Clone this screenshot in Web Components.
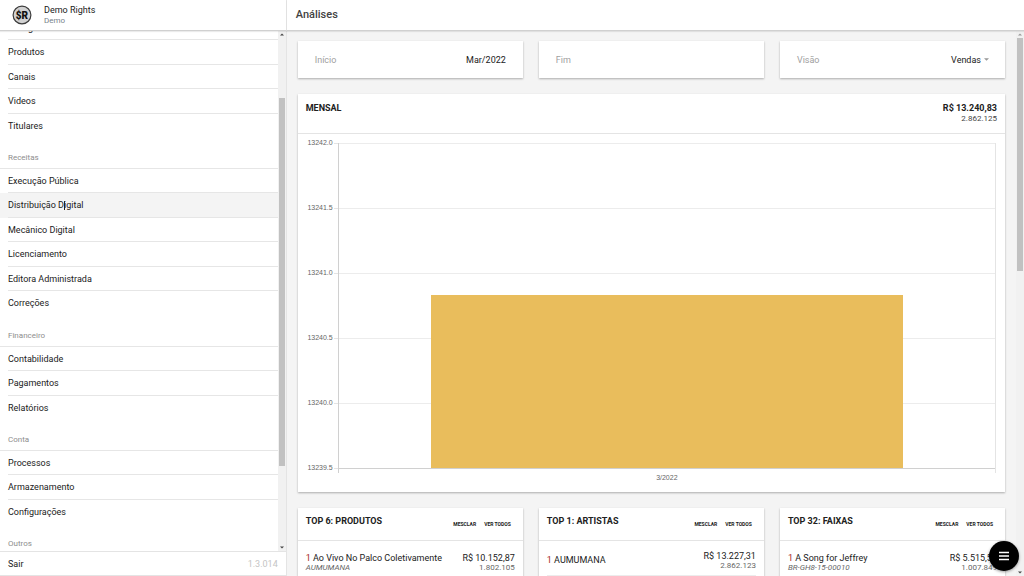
<!DOCTYPE html>
<html lang="pt-BR">
<head>
<meta charset="utf-8">
<title>Análises</title>
<style>
  html, body { height: 100%; }
  body { margin: 0; overflow: hidden; font-family: Roboto, sans-serif; color: #212121; background: #f4f4f4; }
</style>
</head>
<body>
<rights-app>
  <user-badge slot="brand" name="Demo Rights" account="Demo"></user-badge>
  <nav-group slot="nav" items="Fonogramas,Produtos,Canais,Videos,Titulares"></nav-group>
  <nav-group slot="nav" heading="Receitas" active="Distribuição Digital" items="Execução Pública,Distribuição Digital,Mecânico Digital,Licenciamento,Editora Administrada,Correções"></nav-group>
  <nav-group slot="nav" heading="Financeiro" items="Contabilidade,Pagamentos,Relatórios"></nav-group>
  <nav-group slot="nav" heading="Conta" items="Processos,Armazenamento,Configurações"></nav-group>
  <nav-group slot="nav" heading="Outros"></nav-group>
  <dash-grid>
    <filter-field label="Início" value="Mar/2022"></filter-field>
    <filter-field label="Fim" value=""></filter-field>
    <filter-field label="Visão" value="Vendas" kind="select"></filter-field>
    <bar-chart heading="Mensal" total="R$ 13.240,83" count="2.862.125" ticks="13242.0,13241.5,13241.0,13240.5,13240.0,13239.5" category="3/2022"></bar-chart>
    <ranking-card heading="Top 6: Produtos" name="Ao Vivo No Palco Coletivamente" detail="AUMUMANA" amount="R$ 10.152,87" count="1.802.105"></ranking-card>
    <ranking-card heading="Top 1: Artistas" name="AUMUMANA" amount="R$ 13.227,31" count="2.862.123"></ranking-card>
    <ranking-card heading="Top 32: Faixas" name="A Song for Jeffrey" detail="BR-GH8-15-00010" amount="R$ 5.515,53" count="1.007.849"></ranking-card>
  </dash-grid>
</rights-app>

<script>
const CARD = 'background:#fff; box-shadow:0 1px 2px rgba(0,0,0,.3);';

function define(name, render, after) {
  customElements.define(name, class extends HTMLElement {
    connectedCallback() {
      if (this.shadowRoot) return;
      const root = this.attachShadow({ mode: 'open' });
      root.innerHTML = render(key => this.getAttribute(key) || '');
      if (after) after(root);
    }
  });
}

define('user-badge', a => `
  <style>
    :host { display:flex; align-items:center; gap:12px; padding-left:12px; }
    svg { display:block; width:20px; height:20px; }
    strong, span { display:block; }
    strong { font-size:9px; line-height:11px; font-weight:400; }
    span { font-size:8px; line-height:10px; color:#78838a; }
  </style>
  <svg viewBox="0 0 20 20" aria-hidden="true">
    <circle cx="10" cy="10" r="8.9" fill="#d2d2d2" stroke="#3c3c3c" stroke-width="1.2"/>
    <text x="10" y="13.6" text-anchor="middle" font-family="Roboto, sans-serif" font-weight="900" font-size="10" fill="#111">$R</text>
  </svg>
  <div><strong>${a('name')}</strong><span>${a('account')}</span></div>`);

define('nav-group', a => `
  <style>
    :host { display:block; }
    h2 { margin:0; height:31px; box-sizing:border-box; padding:15px 8px 0; border-bottom:1px solid #e6e6e6;
         font-size:8px; line-height:10px; font-weight:400; color:#8e8e8e; }
    ul { margin:0; padding:0; list-style:none; }
    li { height:24px; }
    li:nth-child(even) { height:25px; }
    a { position:relative; display:flex; height:100%; padding-left:8px; color:inherit; text-decoration:none; font-size:9px; }
    a > span { flex:1; display:flex; align-items:center; border-bottom:1px solid #e6e6e6; }
    li:last-child span { border-color:transparent; }
    a.active { background:#f4f4f4; }
    i { position:absolute; left:64px; top:8px; width:1px; height:9px; background:#222; }
  </style>
  ${a('heading') ? `<h2>${a('heading')}</h2>` : ''}
  <ul>${a('items').split(',').filter(Boolean).map(t => {
    const on = t === a('active');
    return `<li><a href="#"${on ? ' class="active"' : ''}><span>${t}</span>${on ? '<i></i>' : ''}</a></li>`;
  }).join('')}</ul>`);

define('scroll-rail', a => `
  <style>
    :host { display:grid; grid-template-rows:7px 1fr 7px; background:#f1f1f1; }
    svg { display:block; width:100%; height:7px; }
    div { display:grid; grid-template-rows:var(--before) var(--thumb) 1fr; }
    b { grid-row:2; margin:0 1px; background:#c1c1c1; }
  </style>
  <svg viewBox="0 0 8 7"><path d="M2 4.6h4L4 2.4z" fill="${a('top') || '#444'}"/></svg>
  <div><b></b></div>
  <svg viewBox="0 0 8 7"><path d="M2 2.4h4L4 4.6z" fill="#444"/></svg>`);

define('filter-field', a => `
  <style>
    :host { display:block; ${CARD} }
    div { display:flex; align-items:center; height:37px; padding:0 17px; font-size:9px; }
    label { color:#a0a0a0; }
    input, select { flex:1; min-width:0; border:0; padding:0; margin:0; background:none; appearance:none; outline:0;
      font:inherit; color:#212121; text-align:right; text-align-last:right; }
    svg { width:5px; height:3px; margin-left:3px; margin-right:-1px; }
  </style>
  <div><label for="f">${a('label')}</label>${a('kind') === 'select'
    ? `<select id="f"><option>${a('value')}</option></select><svg viewBox="0 0 6 3"><path d="M0 0h6L3 3z" fill="#999"/></svg>`
    : `<input id="f" type="text" value="${a('value')}">`}</div>`);

define('bar-chart', a => {
  const ticks = a('ticks').split(',');
  return `
  <style>
    :host { display:block; grid-column:1 / -1; ${CARD} }
    header { display:flex; justify-content:space-between; height:40px; box-sizing:border-box; padding:9px 8px 0; border-bottom:1px solid #e4e4e4; }
    h2 { margin:0; font-size:9px; line-height:11px; font-weight:700; text-transform:uppercase; }
    p { margin:0; text-align:right; font-size:8px; line-height:10px; color:#444; }
    p strong { display:block; font-size:9px; line-height:11px; color:#212121; }
    .chart { display:grid; grid-template-columns:40px 1fr; padding:9px 9px 9px 0; font-family:"Liberation Sans", Arial, sans-serif; font-size:7px; color:#666; }
    .row { grid-column:1; height:65px; display:flex; justify-content:flex-end; align-items:flex-start; }
    .row:nth-child(6) { height:5px; }
    .row span { line-height:8px; margin:-4px 1px 0 0; }
    .row::after { content:""; width:4px; height:1px; background:#e4e4e4; }
    .plot { grid-column:2; grid-row:1 / 7; display:grid; grid-template-rows:repeat(5, 65px) 5px; border-left:1px solid #d0d0d0; border-right:1px solid #e4e4e4; }
    .line { grid-column:1; border-top:1px solid #ececec; }
    .line:nth-child(6) { border-color:#d0d0d0; }
    .bar { grid-column:1; grid-row:1 / 6; align-self:end; justify-self:center; width:72%; height:173px; background:#e9bd5c; }
    .cat { grid-column:2; text-align:center; line-height:10px; }
  </style>
  <header><h2>${a('heading')}</h2><p><strong>${a('total')}</strong>${a('count')}</p></header>
  <div class="chart">
    ${ticks.map((t, i) => `<div class="row" style="grid-row:${i + 1}"><span>${t}</span></div>`).join('')}
    <div class="plot">${ticks.map((_, i) => `<div class="line" style="grid-row:${i + 1}"></div>`).join('')}<div class="bar"></div></div>
    <div class="cat">${a('category')}</div>
  </div>`;
});

define('ranking-card', a => `
  <style>
    :host { display:block; ${CARD} }
    header { display:flex; align-items:center; height:33px; box-sizing:border-box; padding:0 12px 0 8px; border-bottom:1px solid #e4e4e4; }
    h2 { flex:1; margin:0; padding-bottom:5px; font-size:9px; line-height:11px; font-weight:700; text-transform:uppercase; }
    button { border:0; background:none; padding:0; margin-left:8px; font:700 5px/8px Roboto, sans-serif; color:#212121; text-transform:uppercase; }
    ol { margin:0; padding:0 8px; list-style:none; }
    li { display:flex; justify-content:space-between; align-items:center; box-sizing:border-box; border-bottom:1px solid #ececec; font-size:9px; line-height:11px;
         ${a('detail') ? 'height:44px;' : 'height:35px; padding-top:5px;'} }
    b { font-weight:400; color:#a82828; }
    em, small { display:block; font-size:8px; line-height:8px; color:#666; }
    .sum { text-align:right; }
  </style>
  <header><h2>${a('heading')}</h2><button type="button">Mesclar</button><button type="button">Ver todos</button></header>
  <ol><li><div><b>1</b> ${a('name')}${a('detail') ? `<em>${a('detail')}</em>` : ''}</div>
  <div class="sum">${a('amount')}<small>${a('count')}</small></div></li></ol>`);

define('dash-grid', () => `
  <style>
    :host { display:grid; grid-template-columns:repeat(3, minmax(0, 1fr)); gap:16px; padding:10px 11px; }
  </style>
  <slot></slot>`);

define('rights-app', () => `
  <style>
    :host { display:grid; grid-template-columns:28% minmax(0, 1fr); grid-template-rows:31px minmax(0, 1fr); height:100vh; }
    .brand, .title { display:flex; align-items:center; background:#fff; border-bottom:1px solid #d0d0d0; box-shadow:0 1px 1px rgba(0,0,0,.08); z-index:1; }
    .brand, aside { border-right:1px solid #e4e4e4; }
    h1 { margin:0; padding-left:9px; font-size:11px; line-height:14px; font-weight:500; color:#424242; }
    aside { display:grid; grid-template-rows:minmax(0, 1fr) 25px; background:#fff; }
    .scroll { display:grid; grid-template-columns:minmax(0, 1fr) 8px; min-height:0; }
    nav { overflow:hidden; }
    footer { display:flex; justify-content:space-between; align-items:center; box-sizing:border-box; padding:0 8px; border-top:1px solid #e4e4e4; border-bottom:1px solid #e4e4e4; font-size:9px; }
    footer a { color:inherit; text-decoration:none; }
    footer span { color:#c4c4c4; }
    .body { display:grid; grid-template-columns:minmax(0, 1fr) 8px; grid-template-rows:minmax(0, 1fr); }
    main { overflow:hidden; }
    .menu-rail { --before:60px; --thumb:368px; }
    .page-rail { --before:0px; --thumb:233px; }
    button { position:fixed; right:5px; bottom:5px; width:30px; height:30px; padding:0; border:0; border-radius:50%; background:#000; box-shadow:0 1px 3px rgba(0,0,0,.4); }
    button svg { display:block; margin:auto; width:12px; height:12px; }
  </style>
  <div class="brand"><slot name="brand"></slot></div>
  <div class="title"><h1>Análises</h1></div>
  <aside>
    <div class="scroll"><nav><slot name="nav"></slot></nav><scroll-rail class="menu-rail"></scroll-rail></div>
    <footer><a href="#">Sair</a><span>1.3.014</span></footer>
  </aside>
  <div class="body"><main><slot></slot></main><scroll-rail class="page-rail" top="#999"></scroll-rail></div>
  <button type="button" aria-label="Menu"><svg viewBox="0 0 12 12"><path d="M1 2.5h10M1 6h10M1 9.5h10" stroke="#fff" stroke-width="1.4"/></svg></button>`,
  root => requestAnimationFrame(() => { root.querySelector('nav').scrollTop = 15; }));
</script>
</body>
</html>
